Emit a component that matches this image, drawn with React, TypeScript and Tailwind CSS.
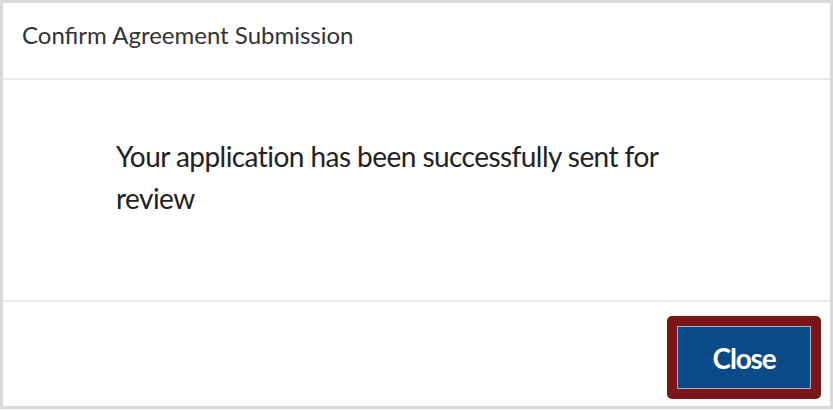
export default function App() {
  return (
    <div
      className="w-[833px] h-[409px] bg-white border-[3px] border-[#d9d9d9] flex flex-col"
      style={{ fontFamily: "Lato, 'Open Sans', sans-serif" }}
    >
      <div className="h-[77px] shrink-0 border-b-2 border-[#e7e8ea] pl-[19px] pt-[18px]">
        <h2 className="text-[24px] leading-[28px] text-[#333333]">
          Confirm Agreement Submission
        </h2>
      </div>

      <div className="h-[222px] shrink-0 border-b-2 border-[#e7e8ea] pl-[113px] pt-[55px]">
        <p className="w-[570px] text-[28px] leading-[42px] text-[#222222] tracking-[-0.55px]">
          Your application has been successfully sent for review
        </p>
      </div>

      <div className="flex-1 flex justify-end items-start pr-[9px] pt-[14px]">
        <div className="rounded-[5px] bg-[#7b1518] p-[10px]">
          <button className="w-[134px] h-[63px] bg-[#0b4a89] border border-[#9fb4cc] text-white text-[28px] font-bold tracking-[-1.2px]">
            Close
          </button>
        </div>
      </div>
    </div>
  );
}
